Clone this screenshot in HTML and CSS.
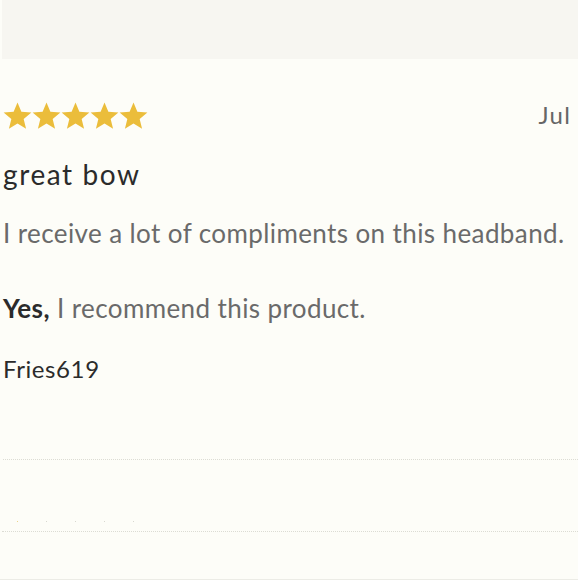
FILE: index.html
```html
<!DOCTYPE html>
<html>
<head>
<meta charset="utf-8">
<link rel="stylesheet" href="styles.css">
</head>
<body>
<div class="page">
  <div class="topbar"></div>
  <div class="review">
    <div class="head">
      <div class="stars">
        <svg class="star" viewBox="0 0 24 24"><path d="M12 1.2l3.2 7.7 8.3.6-6.4 5.4 2 8.1-7.1-4.4-7.1 4.4 2-8.1L.5 9.5l8.3-.6z"/></svg>
        <svg class="star" viewBox="0 0 24 24"><path d="M12 1.2l3.2 7.7 8.3.6-6.4 5.4 2 8.1-7.1-4.4-7.1 4.4 2-8.1L.5 9.5l8.3-.6z"/></svg>
        <svg class="star" viewBox="0 0 24 24"><path d="M12 1.2l3.2 7.7 8.3.6-6.4 5.4 2 8.1-7.1-4.4-7.1 4.4 2-8.1L.5 9.5l8.3-.6z"/></svg>
        <svg class="star" viewBox="0 0 24 24"><path d="M12 1.2l3.2 7.7 8.3.6-6.4 5.4 2 8.1-7.1-4.4-7.1 4.4 2-8.1L.5 9.5l8.3-.6z"/></svg>
        <svg class="star" viewBox="0 0 24 24"><path d="M12 1.2l3.2 7.7 8.3.6-6.4 5.4 2 8.1-7.1-4.4-7.1 4.4 2-8.1L.5 9.5l8.3-.6z"/></svg>
      </div>
      <div class="date">Jul</div>
    </div>
    <h2 class="title">great bow</h2>
    <p class="body">I receive a lot of compliments on this headband.</p>
    <p class="rec"><strong>Yes,</strong> I recommend this product.</p>
    <p class="author">Fries619</p>
  </div>
  <div class="divider"></div>
  <div class="next">
    <div class="dots"><span class="dot gold"></span><span class="dot"></span><span class="dot"></span><span class="dot"></span><span class="dot"></span></div>
  </div>
  <div class="divider second"></div>
  <div class="spacer"></div>
</div>
</body>
</html>
```
FILE: styles.css
```css
html, body {
  margin: 0;
  padding: 0;
  background: #fdfdf8;
}
body {
  font-family: Lato, "Open Sans", sans-serif;
  width: 578px;
  height: 580px;
  overflow: hidden;
}
.page {
  display: flex;
  flex-direction: column;
  height: 580px;
  border-bottom: 1px solid #ecece6;
  box-sizing: border-box;
}
.topbar {
  height: 59px;
  margin-left: 2px;
  background: #f7f6f1;
}
.review {
  padding: 42px 7px 0 3px;
}
.head {
  display: flex;
  justify-content: space-between;
  align-items: flex-start;
  height: 32px;
}
.stars {
  display: flex;
  gap: 0;
}
.star {
  width: 29px;
  height: 29px;
  fill: #ebbd3b;
}
.date {
  font-size: 24px;
  color: #666;
  line-height: 30px;
  margin-top: -1px;
  letter-spacing: 1.2px;
}
.title {
  margin: 24px 0 0;
  font-size: 28px;
  font-weight: 400;
  color: #2b2b2b;
  line-height: 34px;
  letter-spacing: 1.6px;
}
.body {
  margin: 27px 0 0;
  font-size: 26px;
  color: #6a6a6a;
  line-height: 30px;
  letter-spacing: 0.4px;
  white-space: nowrap;
}
.rec {
  margin: 45px 0 0;
  font-size: 26px;
  color: #6a6a6a;
  line-height: 30px;
  letter-spacing: 0.4px;
}
.rec strong {
  color: #2b2b2b;
  font-weight: 700;
}
.author {
  margin: 31px 0 0;
  font-size: 24px;
  color: #2b2b2b;
  line-height: 30px;
  letter-spacing: 0.6px;
}
.divider {
  margin: 0 0 0 3px;
  border-top: 1px dotted #dcdcd4;
  margin-top: 75px;
}
.next {
  height: 71px;
  display: flex;
  align-items: flex-end;
}
.dots {
  display: flex;
  gap: 28px;
  padding-left: 17px;
  margin-bottom: 9px;
}
.dot {
  width: 1px;
  height: 1px;
  background: #d8d8d0;
}
.dot.gold {
  background: #ecd48a;
}
.divider.second {
  margin-top: 0;
  margin-left: 2px;
}
.spacer {
  flex: 1;
}
```
